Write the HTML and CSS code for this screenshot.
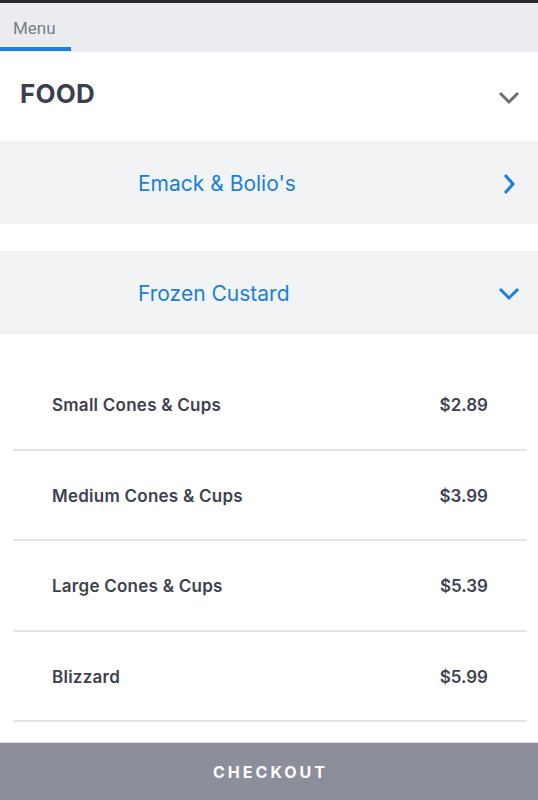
FILE: index.html
```html
<!DOCTYPE html>
<html>
<head>
<meta charset="utf-8">
<link rel="stylesheet" href="styles.css">
</head>
<body>
<div class="topbar"></div>
<nav class="tabs">
  <div class="tab active">Menu</div>
</nav>
<main class="content">
  <div class="section-head">
    <h1 class="section-title">FOOD</h1>
    <svg class="chev chev-gray" width="22" height="14" viewBox="0 0 22 14"><path d="M2 2 L11 11 L20 2" fill="none" stroke="#6e6e70" stroke-width="3"/></svg>
  </div>
  <div class="category">
    <span class="cat-name">Emack &amp; Bolio's</span>
    <svg class="chev chev-right" width="14" height="22" viewBox="0 0 14 22"><path d="M3 2 L11 11 L3 20" fill="none" stroke="#1a7fe0" stroke-width="3"/></svg>
  </div>
  <div class="category open">
    <span class="cat-name">Frozen Custard</span>
    <svg class="chev" width="22" height="14" viewBox="0 0 22 14"><path d="M2 2 L11 11 L20 2" fill="none" stroke="#1a7fe0" stroke-width="3"/></svg>
  </div>
  <ul class="items">
    <li class="item"><span class="item-name">Small Cones &amp; Cups</span><span>$2.89</span></li>
    <li class="item"><span class="item-name">Medium Cones &amp; Cups</span><span>$3.99</span></li>
    <li class="item"><span class="item-name">Large Cones &amp; Cups</span><span>$5.39</span></li>
    <li class="item"><span class="item-name">Blizzard</span><span>$5.99</span></li>
  </ul>
</main>
<footer class="checkout">CHECKOUT</footer>
</body>
</html>
```
FILE: styles.css
```css
* { box-sizing: border-box; }
html, body { margin: 0; padding: 0; }
body {
  width: 538px;
  height: 800px;
  overflow: hidden;
  background: #fff;
  font-family: Inter, "Liberation Sans", sans-serif;
  display: flex;
  flex-direction: column;
}
.topbar { height: 3px; background: #2d2d2f; }
.tabs {
  height: 49px;
  background: #ebecf0;
  display: flex;
  align-items: stretch;
}
.tab {
  font-family: Roboto, "Liberation Sans", sans-serif;
  font-size: 17px;
  color: #7a7d88;
  padding: 15px 13px 0 13px;
  width: 71px;
  border-bottom: 4px solid transparent;
  margin-bottom: 1px;
}
.tab.active { border-bottom-color: #1f7fe0; }
.content { flex: 1; }
.section-head {
  height: 89px;
  display: flex;
  align-items: center;
  justify-content: space-between;
  padding: 0 18px 6px 20px;
}
.section-title {
  margin: 0;
  font-size: 26px;
  font-weight: 700;
  color: #3c3f4e;
  letter-spacing: 0.2px;
}
.chev-gray { margin-top: 8px; }
.category {
  height: 83px;
  background: #f2f3f5;
  display: flex;
  align-items: center;
  justify-content: space-between;
  padding: 2px 18px 0 138px;
  margin-bottom: 27px;
}
.category.open { margin-bottom: 26px; }
.chev-right { margin-right: 4px; }
.cat-name {
  font-size: 21px;
  color: #1a7fe0;
  font-weight: 400;
}
.items {
  list-style: none;
  margin: 0;
  padding: 0 11px 0 13px;
}
.item {
  height: 90.5px;
  border-bottom: 2px solid #e5e5e8;
  display: flex;
  align-items: center;
  justify-content: space-between;
  padding: 2px 39px 0 39px;
  font-size: 17px;
  font-weight: 600;
  color: #3e4150;
}
.item-name { letter-spacing: 0.25px; }
.checkout {
  height: 58px;
  background: #8c8e9a;
  border-top: 1px solid #dcdde2;
  color: #fff;
  font-size: 16px;
  font-weight: 700;
  letter-spacing: 3px;
  display: flex;
  align-items: center;
  justify-content: center;
  padding-left: 3px;
}
```
